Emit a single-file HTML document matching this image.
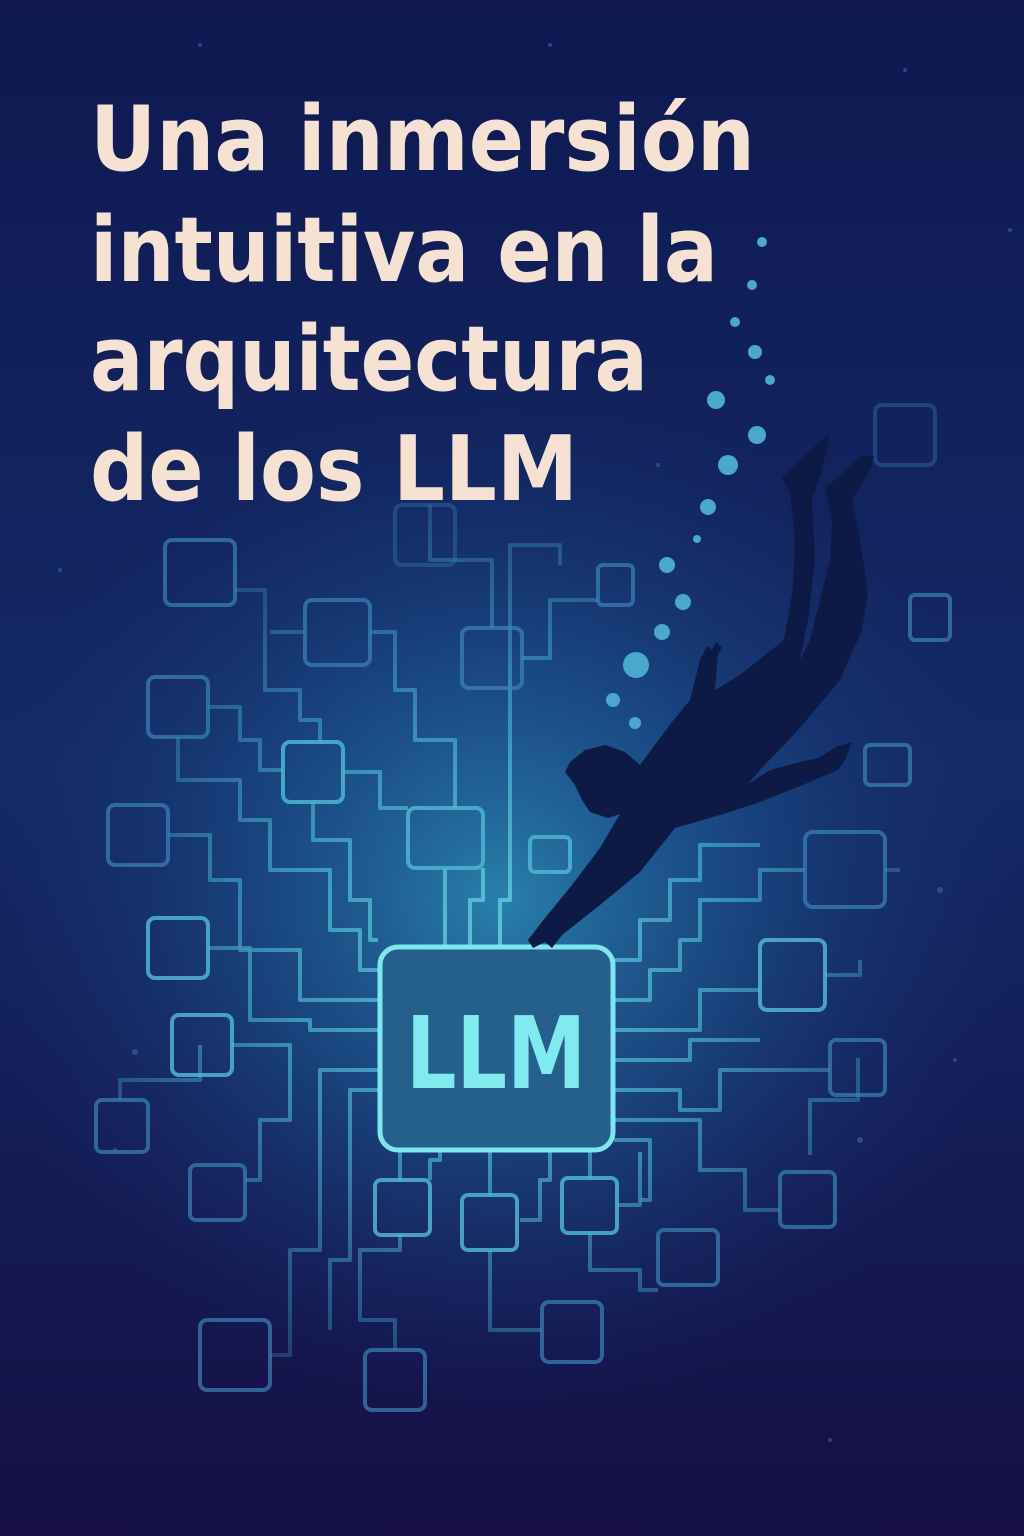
<!DOCTYPE html>
<html><head><meta charset="utf-8"><style>
html,body{margin:0;padding:0;background:#0f1a4d}
svg{display:block}
</style></head><body>
<svg width="1024" height="1536" viewBox="0 0 1024 1536" xmlns="http://www.w3.org/2000/svg">
<defs>
<linearGradient id="bg" x1="0" y1="0" x2="0" y2="1">
<stop offset="0" stop-color="#0f1850"/>
<stop offset="0.5" stop-color="#142a66"/>
<stop offset="1" stop-color="#150f45"/>
</linearGradient>
<radialGradient id="glow" cx="500" cy="900" r="520" gradientUnits="userSpaceOnUse">
<stop offset="0" stop-color="#2c8ab4" stop-opacity="0.9"/>
<stop offset="0.45" stop-color="#1d5c95" stop-opacity="0.6"/>
<stop offset="1" stop-color="#16306e" stop-opacity="0"/>
</radialGradient>
<radialGradient id="fade" cx="500" cy="960" r="520" gradientUnits="userSpaceOnUse">
<stop offset="0" stop-color="#6fe0ea" stop-opacity="1"/>
<stop offset="0.45" stop-color="#4cb8d4" stop-opacity="0.85"/>
<stop offset="1" stop-color="#3a7ab0" stop-opacity="0.35"/>
</radialGradient>
</defs>
<rect width="1024" height="1536" fill="url(#bg)"/>
<rect width="1024" height="1536" fill="url(#glow)"/>

<g fill="none" stroke="url(#fade)" stroke-width="4" stroke-linejoin="round" opacity="0.75">
<path d="M235,590 H265 V690 H300 V720 H320 V742"/>
<path d="M305,632 H270"/>
<path d="M370,632 H395 V690 H415 V740 H455 V808"/>
<path d="M492,628 V560 H430 V505"/>
<path d="M522,658 H550 V600 H598"/>
<path d="M208,707 H240 V740 H260 V770 H283"/>
<path d="M178,737 V780 H240 V820 H270 V870 H330 V930 H360 V970 H378"/>
<path d="M343,772 H380 V808 H408"/>
<path d="M313,802 V840 H350 V900 H370 V940 H378"/>
<path d="M445,868 V945"/>
<path d="M483,868 V900 H470 V945"/>
<path d="M560,565 V545 H510 V900 H500 V945"/>
<path d="M168,835 H210 V880 H240 V950 H300 V1000 H378"/>
<path d="M208,948 H250 V1020 H310 V1030 H378"/>
<path d="M232,1045 H290 V1120 H260 V1180 H245"/>
<path d="M120,1100 V1080 H200 V1045"/>
<path d="M270,1355 H290 V1250 H320 V1070 H378"/>
<path d="M378,1090 H350 V1260 H330 V1330"/>
<path d="M400,1180 V1150"/>
<path d="M430,1180 V1160 H440 V1152"/>
<path d="M490,1195 V1152"/>
<path d="M520,1220 H540 V1180 H550 V1152"/>
<path d="M590,1178 V1152"/>
<path d="M617,1205 H640 V1152"/>
<path d="M400,1235 V1250 H360 V1320 H395 V1350"/>
<path d="M490,1250 V1330 H542"/>
<path d="M590,1233 V1270 H640 V1290 H658"/>
<path d="M614,1140 H650 V1200 H640"/>
<path d="M614,1120 H700 V1170 H745 V1210 H780"/>
<path d="M614,1090 H680 V1110 H720 V1070 H830"/>
<path d="M614,1060 H690 V1040 H760"/>
<path d="M614,1030 H700 V990 H760"/>
<path d="M614,1000 H650 V970 H680 V940 H700 V900 H760 V870 H805"/>
<path d="M614,960 H640 V920 H670 V880 H700 V845 H760"/>
<path d="M825,975 H860 V960"/>
<path d="M885,870 H900"/>
<path d="M858,1058 V1100 H810 V1155"/>
</g>

<g fill="none" stroke-width="4" stroke-linejoin="round">
<g stroke="#3d84b8" opacity="0.7">
<rect x="165" y="540" width="70" height="65" rx="7"/>
<rect x="305" y="600" width="65" height="65" rx="7"/>
<rect x="462" y="628" width="60" height="60" rx="7"/>
<rect x="598" y="565" width="35" height="40" rx="5"/>
<rect x="148" y="677" width="60" height="60" rx="7"/>
<rect x="108" y="805" width="60" height="60" rx="7"/>
<rect x="96" y="1100" width="52" height="52" rx="6"/>
<rect x="190" y="1165" width="55" height="55" rx="6"/>
<rect x="200" y="1320" width="70" height="70" rx="7"/>
<rect x="365" y="1350" width="60" height="60" rx="7"/>
<rect x="542" y="1302" width="60" height="60" rx="7"/>
<rect x="658" y="1230" width="60" height="55" rx="6"/>
<rect x="830" y="1040" width="55" height="55" rx="6"/>
<rect x="780" y="1172" width="55" height="55" rx="6"/>
<rect x="910" y="595" width="40" height="45" rx="5"/>
<rect x="865" y="745" width="45" height="40" rx="5"/>
<rect x="875" y="405" width="60" height="60" rx="7" opacity="0.5"/>
<rect x="395" y="505" width="60" height="60" rx="7" opacity="0.5"/>
<rect x="805" y="832" width="80" height="75" rx="8"/>
</g>
<g stroke="#4fb6d2" opacity="0.85">
<rect x="283" y="742" width="60" height="60" rx="7"/>
<rect x="408" y="808" width="75" height="60" rx="7"/>
<rect x="530" y="837" width="40" height="35" rx="5"/>
<rect x="148" y="918" width="60" height="60" rx="7"/>
<rect x="172" y="1015" width="60" height="60" rx="7"/>
<rect x="375" y="1180" width="55" height="55" rx="6"/>
<rect x="462" y="1195" width="55" height="55" rx="6"/>
<rect x="562" y="1178" width="55" height="55" rx="6"/>
<rect x="760" y="940" width="65" height="70" rx="7"/>
</g>
</g>

<rect x="380" y="947" width="233" height="203" rx="18" fill="#255f8c" stroke="#7ee6ee" stroke-width="5"/>
<text x="496" y="1088" text-anchor="middle" font-family="DejaVu Sans, Liberation Sans, sans-serif" font-weight="bold" font-size="100" fill="#80eaf0" textLength="180" lengthAdjust="spacingAndGlyphs">LLM</text>

<g fill="#4aa8cc">
<circle cx="762" cy="242" r="5"/><circle cx="752" cy="285" r="5"/><circle cx="735" cy="322" r="5"/>
<circle cx="755" cy="352" r="7"/><circle cx="770" cy="380" r="5"/><circle cx="716" cy="400" r="9"/>
<circle cx="757" cy="435" r="9"/><circle cx="728" cy="465" r="10"/><circle cx="708" cy="507" r="8"/>
<circle cx="697" cy="539" r="4"/><circle cx="667" cy="565" r="8"/><circle cx="683" cy="602" r="8"/>
<circle cx="662" cy="632" r="8"/><circle cx="636" cy="665" r="13"/><circle cx="613" cy="700" r="7"/>
<circle cx="635" cy="723" r="6"/>
</g>
<g fill="#3a68a8" opacity="0.6">
<circle cx="550" cy="45" r="2"/><circle cx="905" cy="70" r="2"/><circle cx="1010" cy="230" r="2"/>
<circle cx="940" cy="890" r="3"/><circle cx="955" cy="1060" r="2"/><circle cx="860" cy="1140" r="3"/>
<circle cx="135" cy="1052" r="3"/><circle cx="115" cy="1150" r="2"/><circle cx="60" cy="570" r="2"/>
<circle cx="658" cy="465" r="2"/><circle cx="830" cy="1440" r="2"/><circle cx="200" cy="45" r="2"/>
</g>

<path fill="#0d1a45" d="M830,433 Q815,445 782,478 L790,492 L795,540 L793,588 L784,640 L740,675 L715,690 L718,655 L722,647 L716,642 L712,650 L707,646 L700,660 L690,700 L672,722 L640,765 L625,752 L605,745 L585,750 L570,762 L565,772 L575,785 L582,800 L590,812 L608,818 L620,814 L600,848 L572,885 L545,918 L528,940 L533,948 L545,942 L552,948 L562,935 L600,905 L640,872 L675,828 L720,815 L760,802 L805,784 L838,770 L845,760 L852,742 L838,746 L818,758 L800,762 L770,770 L748,784 L760,770 L800,728 L840,680 L862,630 L868,593 L860,540 L852,500 L870,470 L874,456 L862,456 L825,488 L832,520 L830,560 L810,640 L800,660 L808,620 L815,560 L812,500 L822,470 Z"/>

<g font-family="DejaVu Sans, Liberation Sans, sans-serif" font-weight="bold" font-size="90" fill="#f6e2d2">
<text x="90" y="170" textLength="665" lengthAdjust="spacingAndGlyphs">Una inmersión</text>
<text x="90" y="281" textLength="628" lengthAdjust="spacingAndGlyphs">intuitiva en la</text>
<text x="90" y="390" textLength="558" lengthAdjust="spacingAndGlyphs">arquitectura</text>
<text x="90" y="500" textLength="488" lengthAdjust="spacingAndGlyphs">de los LLM</text>
</g>
</svg>
</body></html>
